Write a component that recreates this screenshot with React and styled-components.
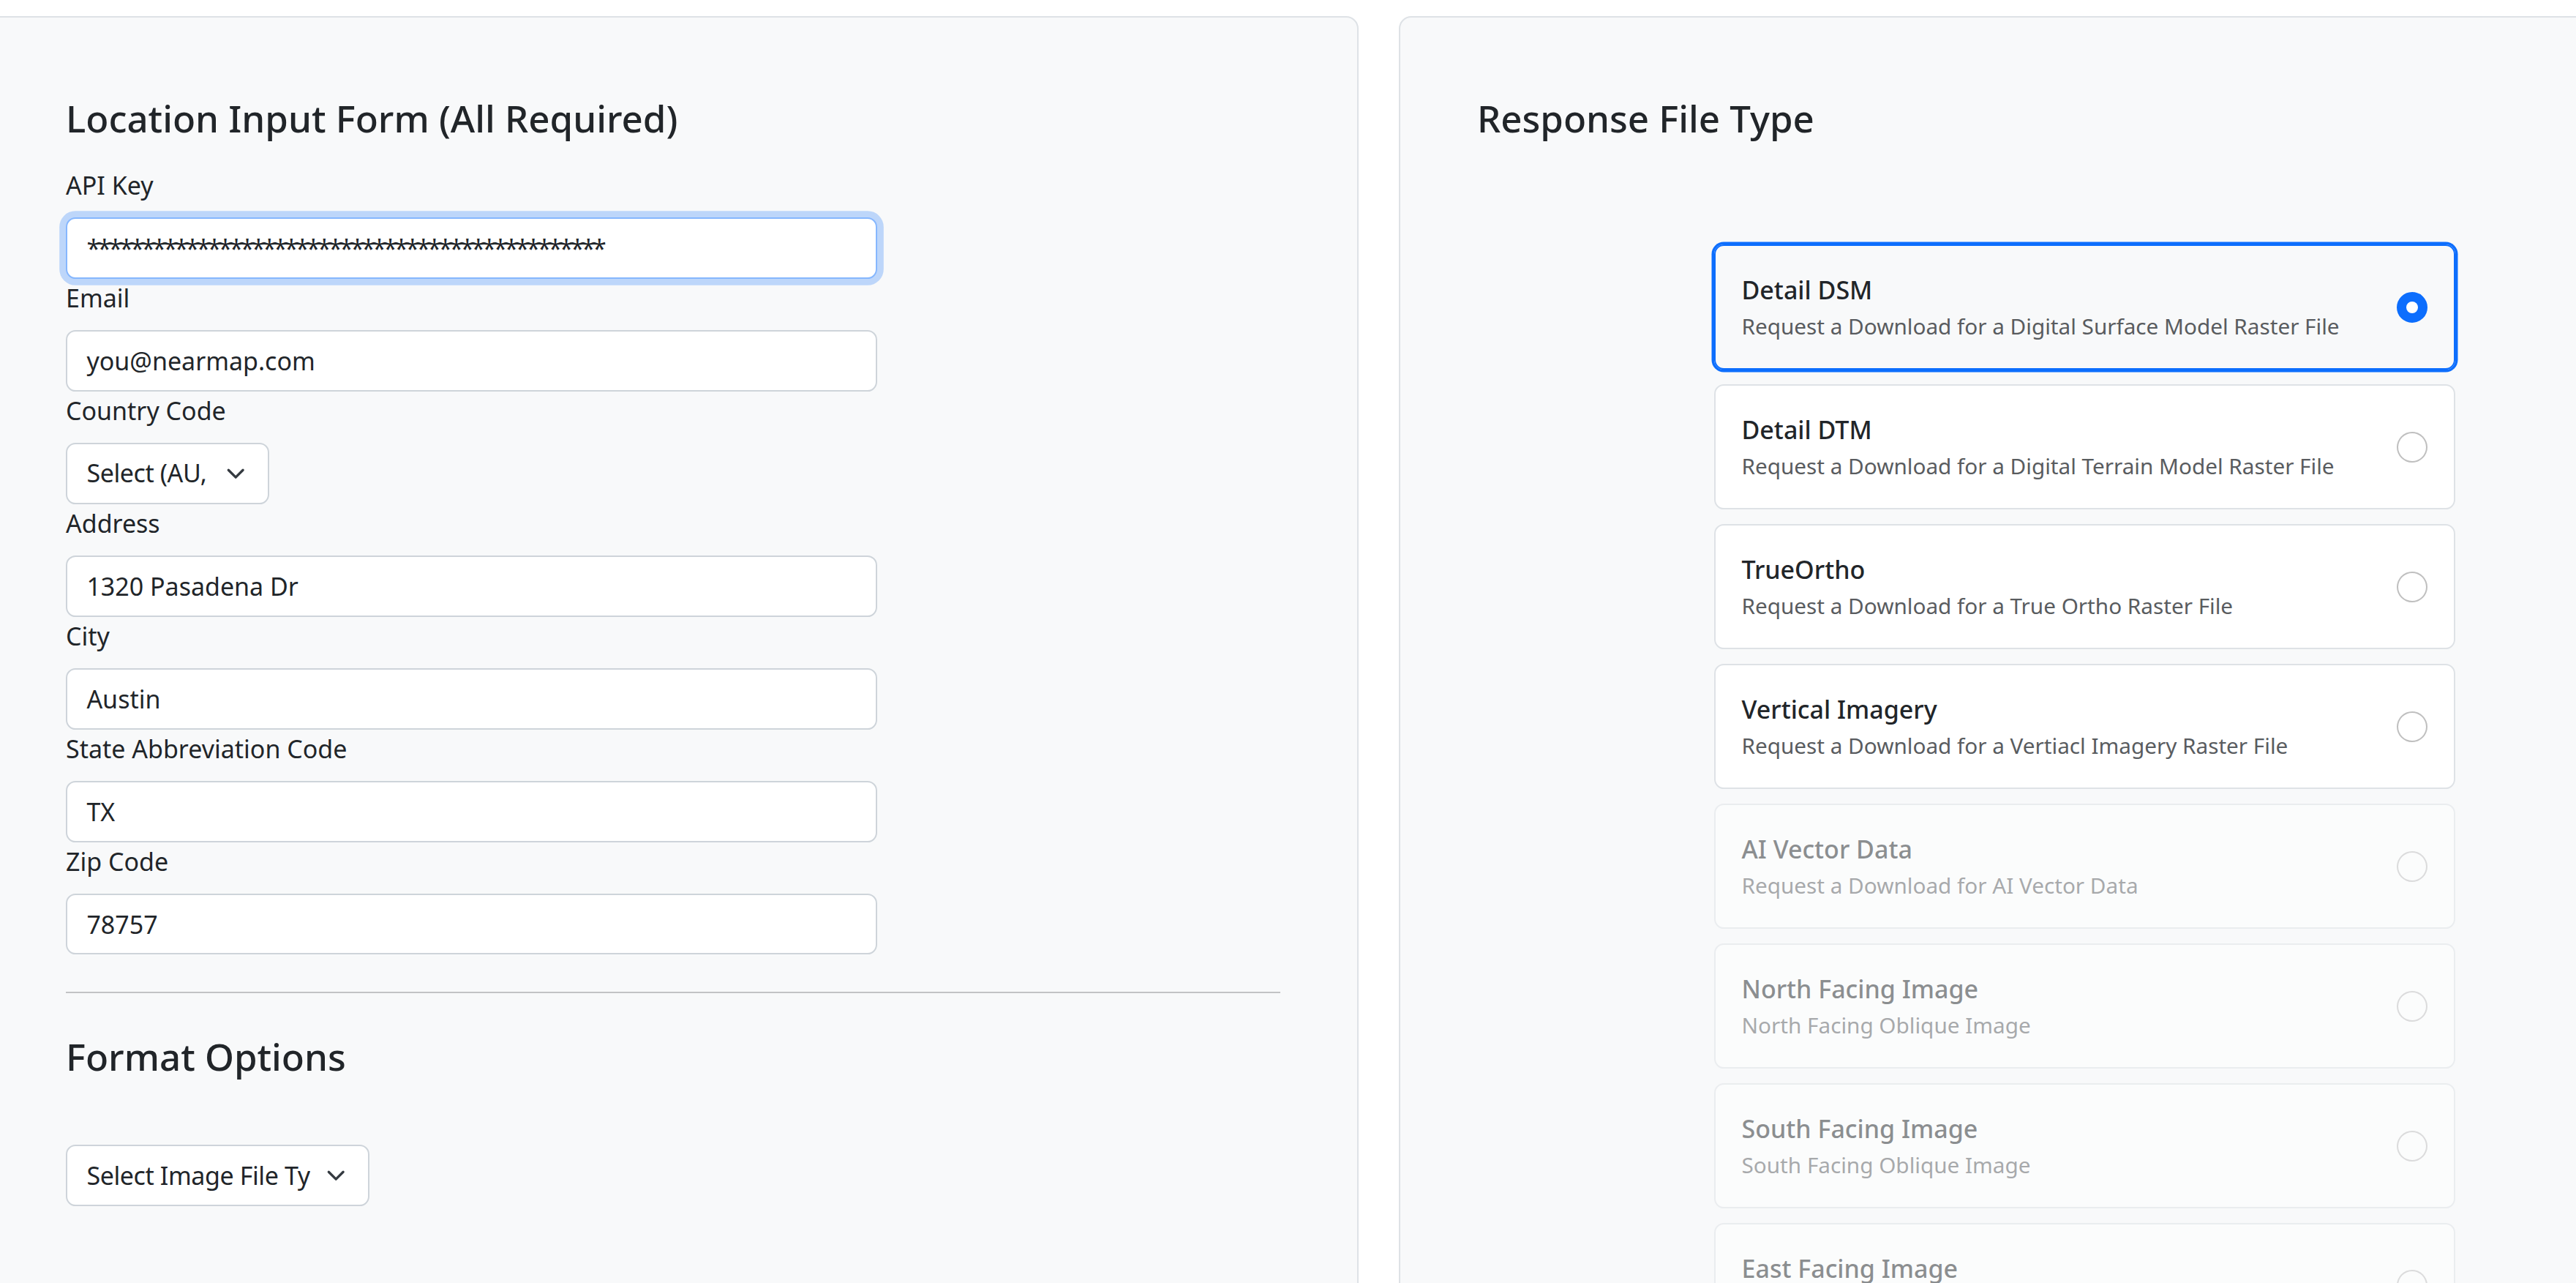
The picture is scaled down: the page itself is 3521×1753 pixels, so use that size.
import React from "react";
import styled, { createGlobalStyle } from "styled-components";

const GlobalStyle = createGlobalStyle`
  * { box-sizing: border-box; }
  html, body {
    margin: 0;
    padding: 0;
    background: #fff;
    overflow: hidden;
  }
  body {
    font-family: "Noto Sans", "Open Sans", sans-serif;
    font-size: 34px;
    line-height: 52.8px;
    color: #212529;
  }
`;

const fields = [
  { label: "API Key", value: "*".repeat(47), focused: true, tight: true },
  { label: "Email", value: "you@nearmap.com" },
  { label: "Country Code", select: "Select (AU, US, CA, NZ)", width: 278 },
  { label: "Address", value: "1320 Pasadena Dr" },
  { label: "City", value: "Austin" },
  { label: "State Abbreviation Code", value: "TX" },
  { label: "Zip Code", value: "78757" },
];

const fileTypes = [
  { title: "Detail DSM", desc: "Request a Download for a Digital Surface Model Raster File", checked: true },
  { title: "Detail DTM", desc: "Request a Download for a Digital Terrain Model Raster File" },
  { title: "TrueOrtho", desc: "Request a Download for a True Ortho Raster File" },
  { title: "Vertical Imagery", desc: "Request a Download for a Vertiacl Imagery Raster File" },
  { title: "AI Vector Data", desc: "Request a Download for AI Vector Data", disabled: true },
  { title: "North Facing Image", desc: "North Facing Oblique Image", disabled: true },
  { title: "South Facing Image", desc: "South Facing Oblique Image", disabled: true },
  { title: "East Facing Image", desc: "East Facing Oblique Image", disabled: true },
  { title: "West Facing Image", desc: "West Facing Oblique Image", disabled: true },
];

const Chevron = () => (
  <svg width="26.4" height="26.4" viewBox="0 0 16 16" fill="none">
    <path d="m2 5 6 6 6-6" stroke="#343a40" strokeWidth="2" strokeLinecap="round" strokeLinejoin="round" />
  </svg>
);

const Select = ({ text, width }) => (
  <SelectBox $width={width}>
    <SelectText>{text}</SelectText>
    <ChevronSlot>
      <Chevron />
    </ChevronSlot>
  </SelectBox>
);

const App = () => {
  return (
    <>
      <GlobalStyle />
      <Page>
        {/* location form */}
        <Panel>
          <Heading $mb={31.6}>Location Input Form (All Required)</Heading>
          {fields.map((f) => (
            <div key={f.label}>
              <Label>{f.label}</Label>
              {f.select ? (
                <Select text={f.select} width={f.width} />
              ) : (
                <Input
                  type="text"
                  defaultValue={f.value}
                  $focused={f.focused}
                  $tight={f.tight}
                  readOnly
                />
              )}
            </div>
          ))}
          <Divider />
          <Heading $mb={87}>Format Options</Heading>
          <Select text="Select Image File Type" width={415} />
        </Panel>

        {/* response type */}
        <Panel>
          <Heading $mb={139}>Response File Type</Heading>
          <CardList>
            {fileTypes.map((t) => (
              <OptionCard key={t.title} $checked={t.checked} $disabled={t.disabled}>
                <div>
                  <CardTitle>{t.title}</CardTitle>
                  <CardDesc>{t.desc}</CardDesc>
                </div>
                <Radio $checked={t.checked} />
              </OptionCard>
            ))}
          </CardList>
        </Panel>
      </Page>
    </>
  );
};
export default App;

const Page = styled.div`
  display: flex;
  align-items: stretch;
  gap: 55px;
  width: 3820px;
  margin-left: -17px;
  padding-top: 22px;
`;

const Panel = styled.section`
  flex: 0 0 1874px;
  min-height: 2100px;
  padding: 104px 105px;
  background: #f8f9fa;
  border: 2px solid #dee2e6;
  border-radius: 17px;
`;

const Heading = styled.h3`
  margin: 0 0 ${(p) => p.$mb}px;
  font-size: 51px;
  font-weight: 500;
  line-height: 67px;
  color: #212529;
`;

const Label = styled.label`
  display: block;
  margin-bottom: 17.6px;
  font-size: 34px;
  line-height: 52.8px;
`;

const Input = styled.input`
  display: block;
  width: 66.8%;
  height: 83.6px;
  padding: 13.2px 26.4px;
  font-family: inherit;
  font-size: 34px;
  line-height: 52.8px;
  letter-spacing: ${(p) => (p.$tight ? "-3.7px" : "normal")};
  color: #212529;
  background: #fff;
  border: 2px solid ${(p) => (p.$focused ? "#86b7fe" : "#ced4da")};
  border-radius: 13.2px;
  box-shadow: ${(p) => (p.$focused ? "0 0 0 8.8px rgba(13, 110, 253, 0.25)" : "none")};
  outline: none;
`;

const SelectBox = styled.div`
  display: flex;
  align-items: center;
  width: ${(p) => p.$width}px;
  height: 83.6px;
  padding: 0 26.4px;
  background: #fff;
  border: 2px solid #ced4da;
  border-radius: 13.2px;
`;

const SelectText = styled.span`
  flex: 1;
  min-width: 0;
  overflow: hidden;
  white-space: nowrap;
  font-size: 34px;
  line-height: 52.8px;
  letter-spacing: -0.4px;
`;

const ChevronSlot = styled.span`
  display: flex;
  justify-content: center;
  flex: 0 0 35.2px;
  margin-left: 17.6px;
`;

const Divider = styled.hr`
  margin: 51px 0 53px;
  border: 0;
  border-top: 2px solid #212529;
  opacity: 0.25;
`;

const CardList = styled.div`
  display: flex;
  flex-direction: column;
  gap: 19.6px;
  width: 1013px;
  margin: 0 auto;
`;

const OptionCard = styled.div`
  display: flex;
  align-items: center;
  justify-content: space-between;
  padding: 34.2px 36px;
  background: ${(p) => (p.$checked ? "transparent" : "#fff")};
  border: 2px solid ${(p) => (p.$checked ? "#0d6efd" : "#dee2e6")};
  border-radius: 13.2px;
  box-shadow: ${(p) => (p.$checked ? "0 0 0 3.5px #0d6efd" : "none")};
  opacity: ${(p) => (p.$disabled ? 0.5 : 1)};
`;

const CardTitle = styled.div`
  font-size: 34px;
  font-weight: 500;
  line-height: 52.8px;
  color: #212529;
`;

const CardDesc = styled.div`
  font-size: 29.7px;
  line-height: 46.2px;
  color: #595c5f;
`;

const Radio = styled.span`
  display: flex;
  align-items: center;
  justify-content: center;
  flex: 0 0 42px;
  height: 42px;
  border-radius: 50%;
  border: 2px solid ${(p) => (p.$checked ? "#0d6efd" : "rgba(0, 0, 0, 0.25)")};
  background: ${(p) => (p.$checked ? "#0d6efd" : "#fff")};

  &::after {
    content: "";
    display: ${(p) => (p.$checked ? "block" : "none")};
    width: 16px;
    height: 16px;
    border-radius: 50%;
    background: #fff;
  }
`;
